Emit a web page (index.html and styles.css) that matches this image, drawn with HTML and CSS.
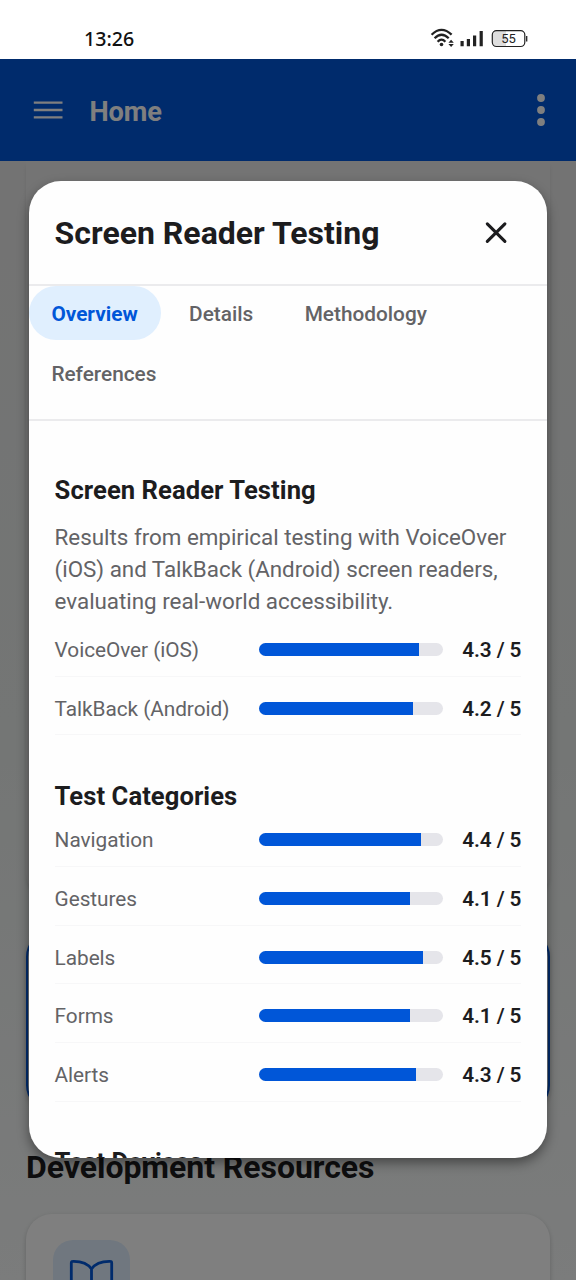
FILE: index.html
```html
<!DOCTYPE html>
<html lang="en">
<head>
<meta charset="utf-8">
<title>Screen Reader Testing</title>
<link rel="stylesheet" href="styles.css">
</head>
<body>
<div class="screen">
  <header class="status">
    <span class="time">13:26</span>
    <svg class="status-icons" width="100" height="24" viewBox="0 0 100 24">
      <g fill="none" stroke="#222" stroke-width="2.3">
        <path d="M2.600 8.700Q12.500 -1 22.600 8.700"/>
        <path d="M5.600 12.200Q12.500 5.200 19.700 12.200"/>
        <path d="M8.600 15.700Q12.500 11.700 16.400 15.700"/>
      </g>
      <circle cx="12.500" cy="18.500" r="1.800" fill="#222"/>
      <path d="M19.400 16.700l2.700-3 2.700 3zM19.400 18l2.700 3 2.700-3z" fill="#222"/>
      <path d="M31.500 15h3.200v5.200h-3.200zM37.800 13h3.200v7.200h-3.200zM44 9.500h3.200v10.700H44zM50.600 5H53.800v15.200h-3.200z" fill="#222"/>
      <path d="M67 5h10v15H67q-3 0-3-3V8q0-3 3-3z" fill="#dedede"/>
      <rect x="63.300" y="4.600" width="32.500" height="15.900" rx="4.200" fill="none" stroke="#222" stroke-width="1.200"/>
      <path d="M97.700 10v5.500" stroke="#222" stroke-width="1.300"/>
      <text x="79.500" y="17.200" text-anchor="middle" class="battery">55</text>
    </svg>
  </header>
  <div class="app">
    <header class="appbar">
      <svg width="30" height="20" viewBox="0 0 30 20" stroke="#fff" stroke-width="2.300"><path d="M.8 2.700h28.700M.8 10h28.700M.8 17.300h28.700"/></svg>
      <span class="home">Home</span>
      <svg class="more" width="10" height="34" viewBox="0 0 10 34" fill="#fff"><circle cx="5" cy="5" r="3.900"/><circle cx="5" cy="17" r="3.900"/><circle cx="5" cy="29" r="3.900"/></svg>
    </header>
    <main class="page">
      <section class="card intro"></section>
      <section class="card selected"></section>
      <h2 class="resources">Development Resources</h2>
      <section class="card guide">
        <div class="tile">
          <svg width="46" height="46" viewBox="0 0 46 46" fill="none" stroke="#0056d8" stroke-width="2.800" stroke-linejoin="round"><path d="M22.500 12Q17 4 3.500 4.400Q2.300 4.400 2.300 6V37Q17 35 22.500 41Q28 35 42.700 37V6Q42.700 4.400 41.500 4.400Q28 4 22.500 12V41"/></svg>
        </div>
      </section>
    </main>
    <div class="overlay">
      <div class="modal">
        <div class="modal-head">
          <h1>Screen Reader Testing</h1>
          <svg width="24" height="24" viewBox="0 0 24 24" stroke="#1c1c1e" stroke-width="3.100" stroke-linecap="round"><path d="M3.300 2.800l17.600 17.600M20.900 2.800L3.300 20.400"/></svg>
        </div>
        <nav class="tabs">
          <span class="tab active">Overview</span><span class="tab">Details</span><span class="tab">Methodology</span><span class="tab">References</span>
        </nav>
        <div class="body">
          <h2>Screen Reader Testing</h2>
          <p>Results from empirical testing with VoiceOver<br>(iOS) and TalkBack (Android) screen readers,<br>evaluating real-world accessibility.</p>
          <div class="row"><span class="label">VoiceOver (iOS)</span><div class="bar"><div class="fill" style="width:87%"></div></div><b>4.3 / 5</b></div>
          <div class="row"><span class="label">TalkBack (Android)</span><div class="bar"><div class="fill" style="width:83.700%"></div></div><b>4.2 / 5</b></div>
          <h2 class="next">Test Categories</h2>
          <div class="row"><span class="label">Navigation</span><div class="bar"><div class="fill" style="width:88%"></div></div><b>4.4 / 5</b></div>
          <div class="row"><span class="label">Gestures</span><div class="bar"><div class="fill" style="width:82%"></div></div><b>4.1 / 5</b></div>
          <div class="row"><span class="label">Labels</span><div class="bar"><div class="fill" style="width:89.300%"></div></div><b>4.5 / 5</b></div>
          <div class="row"><span class="label">Forms</span><div class="bar"><div class="fill" style="width:82%"></div></div><b>4.1 / 5</b></div>
          <div class="row"><span class="label">Alerts</span><div class="bar"><div class="fill" style="width:85.300%"></div></div><b>4.3 / 5</b></div>
          <h2 class="next devices">Test Devices</h2>
        </div>
      </div>
    </div>
  </div>
</div>
</body>
</html>
```

FILE: styles.css
```css
* { box-sizing: border-box; }
body { margin: 0; font-family: Roboto, sans-serif; color: #1c1c1e; }
h1, h2, p { margin: 0; }
.screen { width: 576px; height: 1280px; overflow: hidden; display: flex; flex-direction: column; background: #fff; }
.status { height: 59px; flex: none; display: flex; justify-content: space-between; padding: 26px 47px 0 84px; }
.time { font: 500 19.600px/26px "Noto Sans", sans-serif; color: #111; }
.battery { font: 400 13px Roboto, sans-serif; fill: #222; }
.app { position: relative; flex: 1; min-height: 0; display: flex; flex-direction: column; }
.appbar { height: 102px; flex: none; background: #0056d8; display: flex; align-items: center; padding: 0 30px 0 33px; color: #fff; }
.home { margin-left: 26.500px; font-size: 27.200px; font-weight: 700; line-height: 34px; padding-top: 3px; letter-spacing: -.1px; }
.more { margin-left: auto; }
.page { flex: 1; min-height: 0; overflow: hidden; padding: 0 26px; background: linear-gradient(#e6e6e6, #e8ecea 50%, #f6f8f8); }
.card { border-radius: 26px; box-shadow: 0 2px 5px rgba(0,0,0,.2); }
.intro { height: 738px; border-radius: 0 0 26px 26px; background: #e9e9e9; box-shadow: 0 4px 5px -2px rgba(0,0,0,.2); }
.selected { height: 180px; margin-top: 32px; background: #e0effe; border: 2px solid #0056d8; }
.resources { margin-top: 36px; height: 40px; line-height: 40px; font-size: 32px; font-weight: 700; letter-spacing: -.05px; white-space: nowrap; }
.guide { height: 200px; margin-top: 27px; padding: 26px 27px; background: #fff; }
.tile { width: 77px; height: 77px; border-radius: 20px; background: #e0effe; display: flex; justify-content: center; padding-top: 17px; }
.overlay { position: absolute; inset: 0; background: rgba(0,0,0,.5); padding: 122px 29px; }
.modal { height: 977px; border-radius: 32px; background: #fefefe; box-shadow: 0 5px 12px rgba(0,0,0,.42); display: flex; flex-direction: column; }
.modal-head { height: 105px; flex: none; border-bottom: 2px solid #ebebed; display: flex; align-items: center; justify-content: space-between; padding: 0 39px 0 25.600px; }
h1 { font-size: 32px; font-weight: 700; line-height: 40px; padding-top: 1px; }
.tabs { height: 135px; flex: none; border-bottom: 2px solid #ebebed; display: flex; flex-wrap: wrap; align-content: flex-start; gap: 6px; }
.tab { height: 54px; line-height: 56px; padding: 0 23px 0 22.400px; border-radius: 27px; font-size: 20.800px; font-weight: 500; color: #636366; }
.active { background: #e0effe; color: #0056d8; font-weight: 700; }
.body { flex: 1; min-height: 0; overflow: hidden; padding: 50px 25.600px 0; }
h2 { font-size: 25.600px; font-weight: 700; line-height: 38px; letter-spacing: .06px; }
p { margin-top: 12px; font-size: 22.400px; line-height: 32px; height: 97px; letter-spacing: -.02px; white-space: nowrap; color: #636366; }
.row { height: 58.700px; border-bottom: 1.600px solid #f7f7f8; display: grid; grid-template-columns: 204.500px 184px 1fr; align-items: center; padding-top: 5px; }
.row .label { font-size: 20.800px; letter-spacing: -.05px; color: #636366; white-space: nowrap; padding-top: 1px; }
.bar { height: 13px; border-radius: 7px; background: #e5e5ea; overflow: hidden; }
.fill { height: 100%; background: #0056d8; }
.row b { font-size: 20.800px; font-weight: 600; letter-spacing: -.08px; text-align: right; white-space: nowrap; padding-top: 1px; }
.next { margin-top: 42px; height: 31px; }
.devices { margin-top: 41px; }
```
